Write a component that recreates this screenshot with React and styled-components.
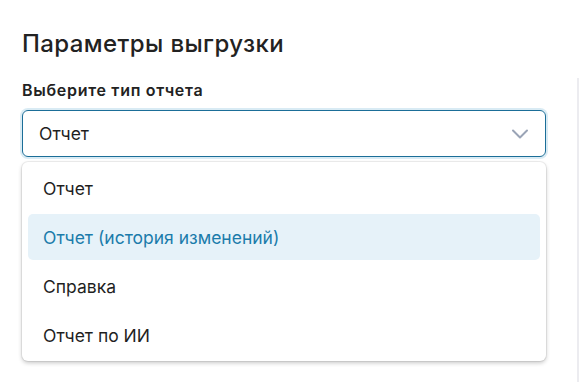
import React, { useState } from "react";
import styled, { createGlobalStyle } from "styled-components";

const GlobalStyle = createGlobalStyle`
  html, body {
    margin: 0;
    padding: 0;
    background: #fff;
    font-family: Inter, "Noto Sans", sans-serif;
    color: #1f1f1f;
  }
  * { box-sizing: border-box; }
`;

const options = [
  "Отчет",
  "Отчет (история изменений)",
  "Справка",
  "Отчет по ИИ",
];

const Page = styled.div`
  position: relative;
  width: 579px;
  height: 382px;
  overflow: hidden;
  padding: 28px 33px 0 22px;
`;

const ScrollTrack = styled.div`
  position: absolute;
  right: 0;
  top: 78px;
  bottom: 0;
  width: 2px;
  background: #ececf0;
`;

const Title = styled.h2`
  margin: 0;
  font-size: 24px;
  font-weight: 500;
  line-height: 32px;
  letter-spacing: 0.4px;
  color: #222;
`;

const Label = styled.div`
  margin-top: 20px;
  font-size: 16px;
  font-weight: 600;
  line-height: 20px;
  letter-spacing: 0.7px;
  color: #222;
`;

const Field = styled.div`
  position: relative;
  margin-top: 10px;
`;

const Control = styled.div`
  height: 47px;
  display: flex;
  align-items: center;
  justify-content: space-between;
  padding: 0 15px 0 16px;
  border: 1px solid #1b6e98;
  border-radius: 6px;
  box-shadow: 0 0 0 2px #d9ebf4;
  font-size: 17.5px;
  color: #1f1f1f;
  cursor: pointer;
`;

const Chevron = styled.svg`
  width: 20px;
  height: 20px;
  color: #9aa4b6;
`;

const Menu = styled.ul`
  list-style: none;
  margin: 5px 0 0;
  padding: 3px 6px;
  display: flex;
  flex-direction: column;
  gap: 3px;
  background: #fff;
  border-radius: 6px;
  box-shadow: 0 0 0 1px rgba(0, 0, 0, 0.06), 0 2px 4px rgba(0, 0, 0, 0.22);
`;

const Item = styled.li`
  height: 46px;
  display: flex;
  align-items: center;
  padding: 0 15px;
  border-radius: 5px;
  font-size: 17.5px;
  color: ${(p) => (p.$active ? "#1b7cab" : "#1f1f1f")};
  background: ${(p) => (p.$active ? "#e6f2f9" : "transparent")};
  cursor: pointer;
`;

export default function App() {
  const [hover, setHover] = useState(1);
  return (
    <Page>
      <GlobalStyle />
      <Title>Параметры выгрузки</Title>
      <Label>Выберите тип отчета</Label>
      <Field>
        <Control>
          <span>Отчет</span>
          <Chevron viewBox="0 0 20 20" fill="none">
            <path
              d="M3 6.5l7 7 7-7"
              stroke="currentColor"
              strokeWidth="2"
              strokeLinecap="round"
              strokeLinejoin="round"
            />
          </Chevron>
        </Control>
        <Menu>
          {options.map((o, i) => (
            <Item key={o} $active={i === hover} onMouseEnter={() => setHover(i)}>
              {o}
            </Item>
          ))}
        </Menu>
      </Field>
      <ScrollTrack />
    </Page>
  );
}
